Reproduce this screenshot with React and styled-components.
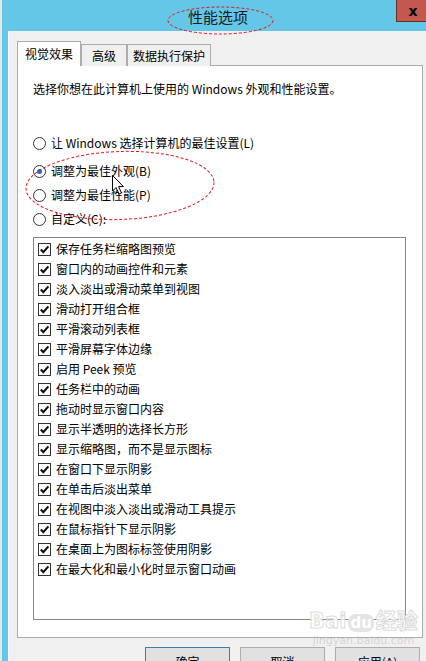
import React from "react";
import styled, { createGlobalStyle } from "styled-components";

const GlobalStyle = createGlobalStyle`
  html, body {
    margin: 0;
    padding: 0;
    background: #e6e6e6;
    overflow: hidden;
  }
`;

const FONT = `"Noto Sans CJK SC", "Liberation Sans", sans-serif`;

const effects = [
  "保存任务栏缩略图预览",
  "窗口内的动画控件和元素",
  "淡入淡出或滑动菜单到视图",
  "滑动打开组合框",
  "平滑滚动列表框",
  "平滑屏幕字体边缘",
  "启用 Peek 预览",
  "任务栏中的动画",
  "拖动时显示窗口内容",
  "显示半透明的选择长方形",
  "显示缩略图，而不是显示图标",
  "在窗口下显示阴影",
  "在单击后淡出菜单",
  "在视图中淡入淡出或滑动工具提示",
  "在鼠标指针下显示阴影",
  "在桌面上为图标标签使用阴影",
  "在最大化和最小化时显示窗口动画",
];

const radios = [
  { label: "让 Windows 选择计算机的最佳设置(L)", gap: 36 },
  { label: "调整为最佳外观(B)", gap: 8, checked: true },
  { label: "调整为最佳性能(P)", gap: 4 },
  { label: "自定义(C):", gap: 4 },
];

const App = () => {
  return (
    <Page>
      <GlobalStyle />
      <Frame>
        <TitleBar>
          <Title>性能选项</Title>
          <CloseButton>x</CloseButton>
        </TitleBar>
        <Client>
          <TabRow>
            <Tab $active>视觉效果</Tab>
            <Tab $width={46}>高级</Tab>
            <Tab $width={84}>数据执行保护</Tab>
          </TabRow>
          <Panel>
            <Intro>选择你想在此计算机上使用的 Windows 外观和性能设置。</Intro>
            {radios.map((r) => (
              <RadioRow key={r.label} $gap={r.gap}>
                <Radio $checked={r.checked} />
                <span>{r.label}</span>
              </RadioRow>
            ))}
            <ListBox>
              {effects.map((name) => (
                <CheckRow key={name}>
                  <CheckBox>
                    <svg width="11" height="11" viewBox="0 0 11 11">
                      <polyline
                        points="1.8,5.6 4.3,8.2 9.4,2.4"
                        fill="none"
                        stroke="#111"
                        strokeWidth="2.1"
                      />
                    </svg>
                  </CheckBox>
                  <span>{name}</span>
                </CheckRow>
              ))}
            </ListBox>
          </Panel>
          <ButtonRow>
            <DlgButton $primary>确定</DlgButton>
            <DlgButton>取消</DlgButton>
            <DlgButton>应用(A)</DlgButton>
          </ButtonRow>
        </Client>
      </Frame>

      <Watermark>
        <span className="logo">Bai<b>du</b>经验</span>
        <span className="url">jingyan.baidu.com</span>
      </Watermark>

      <Overlay width="426" height="661" viewBox="0 0 426 661">
        <g fill="none" stroke="#e0141e" strokeWidth="1" strokeDasharray="3 2">
          <ellipse cx="220.5" cy="20.5" rx="52.5" ry="13.5" />
          <ellipse cx="56.5" cy="52.5" rx="35.5" ry="10" />
          <ellipse cx="120" cy="185.5" rx="94" ry="34" transform="rotate(-2 120 185.5)" />
        </g>
        <path
          d="M112.5 175.5 L112.5 191 L116 187.5 L119 194 L121.5 193 L118.6 186.6 L123.5 186.6 Z"
          fill="#fff"
          stroke="#000"
          strokeWidth="1"
          strokeLinejoin="round"
        />
      </Overlay>
    </Page>
  );
};

export default App;

const Page = styled.div`
  position: relative;
  width: 426px;
  height: 661px;
  overflow: hidden;
  font-family: ${FONT};
`;

const Frame = styled.div`
  display: flex;
  flex-direction: column;
  margin-left: 2px;
  height: 661px;
  background: #64c7e8;
`;

const TitleBar = styled.div`
  display: flex;
  align-items: flex-start;
  height: 31px;
  flex: none;
`;

const Title = styled.div`
  flex: 1;
  padding: 7px 0 0 38px;
  text-align: center;
  font-size: 15px;
  line-height: 20px;
  color: #1b1b1b;
`;

const CloseButton = styled.div`
  width: 30px;
  height: 22px;
  box-sizing: border-box;
  border: 1px solid #6a2d28;
  border-top: none;
  border-right: none;
  background: #c5584e;
  display: flex;
  align-items: center;
  justify-content: center;
  padding-left: 3px;
  font-family: "DejaVu Sans", sans-serif;
  font-weight: bold;
  font-size: 14px;
  color: #000;
`;

const Client = styled.div`
  flex: 1;
  display: flex;
  flex-direction: column;
  margin-left: 6px;
  padding: 10px 4px 0 8px;
  background: #f0f0f0;
  border-left: 1px solid #f7f7f7;
  box-sizing: border-box;
`;

const TabRow = styled.div`
  display: flex;
  align-items: flex-end;
  height: 25px;
  position: relative;
  z-index: 1;
`;

const Tab = styled.div`
  box-sizing: border-box;
  width: ${(p) => (p.$active ? 64 : p.$width)}px;
  height: ${(p) => (p.$active ? 25 : 22)}px;
  border: 1px solid #acacac;
  border-bottom: none;
  background: ${(p) => (p.$active ? "#fff" : "#f0f0f0")};
  display: flex;
  align-items: center;
  justify-content: center;
  padding-bottom: ${(p) => (p.$active ? 1 : 0)}px;
  font-size: 12px;
  color: #000;
`;

const Panel = styled.div`
  box-sizing: border-box;
  width: 406px;
  height: 573px;
  margin-top: -1px;
  padding: 15px 15px 0 15px;
  border: 1px solid #acacac;
  background: #fff;
  display: flex;
  flex-direction: column;
  font-size: 12px;
  color: #000;
`;

const Intro = styled.div`
  line-height: 16px;
  height: 16px;
`;

const RadioRow = styled.div`
  display: flex;
  align-items: center;
  gap: 5px;
  height: 20px;
  margin-top: ${(p) => p.$gap}px;
  line-height: 20px;
`;

const Radio = styled.span`
  box-sizing: border-box;
  width: 13px;
  height: 13px;
  border-radius: 50%;
  border: 1px solid #333;
  background: #fff;
  display: grid;
  place-items: center;
  &::after {
    content: "";
    width: 5px;
    height: 5px;
    border-radius: 50%;
    background: ${(p) => (p.$checked ? "#1e70c8" : "transparent")};
  }
`;

const ListBox = styled.div`
  box-sizing: border-box;
  width: 373px;
  height: 383px;
  margin-top: 8px;
  padding: 1px 0 0 4px;
  border: 1px solid #828790;
  background: #fff;
`;

const CheckRow = styled.div`
  display: flex;
  align-items: center;
  gap: 5px;
  height: 20px;
  line-height: 20px;
`;

const CheckBox = styled.span`
  box-sizing: border-box;
  width: 13px;
  height: 13px;
  border: 1px solid #333;
  background: #fff;
  display: grid;
  place-items: center;
  svg {
    display: block;
  }
`;

const ButtonRow = styled.div`
  display: flex;
  justify-content: flex-end;
  gap: 10px;
  margin-top: 9px;
  padding-right: 2px;
`;

const DlgButton = styled.div`
  box-sizing: border-box;
  width: 85px;
  height: 28px;
  border: 1px solid ${(p) => (p.$primary ? "#3c7fb1" : "#adadad")};
  background: #e1e1e1;
  display: flex;
  align-items: center;
  justify-content: center;
  font-size: 12px;
  color: #000;
`;

const Watermark = styled.div`
  position: absolute;
  left: 309px;
  top: 608px;
  display: flex;
  flex-direction: column;
  align-items: center;
  pointer-events: none;
  .logo {
    font-family: "DejaVu Sans", "Noto Sans CJK SC", sans-serif;
    font-size: 21px;
    font-weight: bold;
    color: rgba(255, 255, 255, 0.85);
    -webkit-text-stroke: 1px #dcdcdc;
    letter-spacing: 0px;
    line-height: 26px;
  }
  .logo b {
    display: inline-block;
    margin: 0 2px;
    padding: 0 2px;
    border-radius: 8px;
    background: #e4e4e4;
    color: #fff;
    -webkit-text-stroke: 0;
    font-size: 15px;
    line-height: 18px;
  }
  .url {
    font-family: "DejaVu Sans", sans-serif;
    font-size: 11px;
    line-height: 14px;
    color: rgba(205, 205, 205, 0.8);
  }
`;

const Overlay = styled.svg`
  position: absolute;
  left: 0;
  top: 0;
  pointer-events: none;
`;
